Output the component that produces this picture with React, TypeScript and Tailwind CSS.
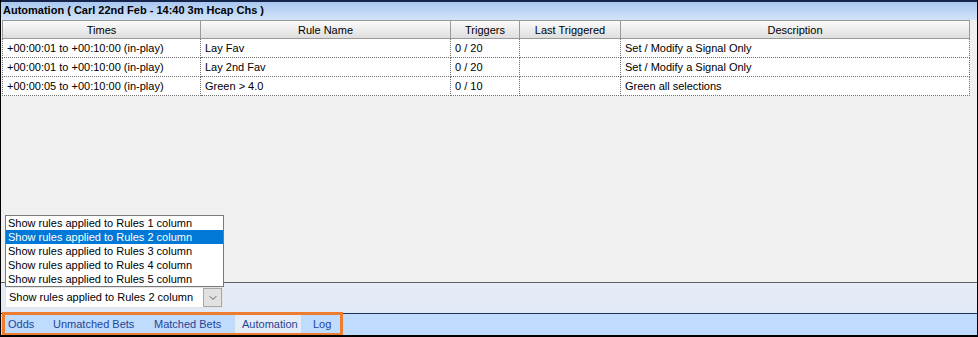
import { ChevronDown } from "lucide-react";

const rules = [
    { times: "+00:00:01 to +00:10:00 (in-play)", name: "Lay Fav", triggers: "0 / 20", last: "", desc: "Set / Modify a Signal Only" },
    { times: "+00:00:01 to +00:10:00 (in-play)", name: "Lay 2nd Fav", triggers: "0 / 20", last: "", desc: "Set / Modify a Signal Only" },
    { times: "+00:00:05 to +00:10:00 (in-play)", name: "Green > 4.0", triggers: "0 / 10", last: "", desc: "Green all selections" },
];

const headers = ["Times", "Rule Name", "Triggers", "Last Triggered", "Description"];

const options = [1, 2, 3, 4, 5].map((n) => `Show rules applied to Rules ${n} column`);

// fixed tab boxes, matching the WinForms tab strip
const tabs = [
    { label: "Odds", cls: "w-[45px] pl-[7px]" },
    { label: "Unmatched Bets", cls: "w-[101px] pl-[7px]" },
    { label: "Matched Bets", cls: "w-[87px] pl-[7px]" },
    { label: "Automation", cls: "w-[68px] pl-[7px] bg-[#e4ecf8] border-x border-[#c9d9ee]" },
    { label: "Log", cls: "pl-[11px]" },
];

export default function App() {
    return (
        <div className="w-[978px] h-[337px] flex flex-col bg-[#f0f0f0] border-x border-b-2 border-black text-[11px] text-black font-['Liberation_Sans',Arial,sans-serif] overflow-hidden">
            {/* title bar */}
            <div className="h-[20px] shrink-0 border-t-2 border-[#14244a] bg-gradient-to-b from-[#a9c7ef] to-[#d3e4f9] pl-[2px] font-bold leading-[17px]">
                Automation ( Carl 22nd Feb - 14:40 3m Hcap Chs )
            </div>

            {/* rules table */}
            <div className="h-[262px] shrink-0 bg-[#f0f0f0] pl-[1px]">
                <div className="w-[968px] grid grid-cols-[199px_250px_69px_101px_349px]">
                    {headers.map((h) => (
                        <div
                            key={h}
                            className="h-[19px] leading-[18px] text-center bg-gradient-to-b from-[#fbfbfb] to-[#dedede] border-t border-r border-b border-[#9a9a9a] first:border-l"
                        >
                            {h}
                        </div>
                    ))}
                    {rules.map((r, i) => (
                        <div key={i} className="contents">
                            <div className="h-[19px] leading-[18px] pl-[4px] bg-white border-l border-r border-b border-dotted border-[#6f6f6f]">{r.times}</div>
                            <div className="h-[19px] leading-[18px] pl-[4px] bg-white border-r border-b border-dotted border-[#6f6f6f]">{r.name}</div>
                            <div className="h-[19px] leading-[18px] pl-[4px] bg-white border-r border-b border-dotted border-[#6f6f6f]">{r.triggers}</div>
                            <div className="h-[19px] leading-[18px] pl-[4px] bg-white border-r border-b border-dotted border-[#6f6f6f]">{r.last}</div>
                            <div className="h-[19px] leading-[18px] pl-[4px] bg-white border-r border-b border-dotted border-[#6f6f6f]">{r.desc}</div>
                        </div>
                    ))}
                </div>
            </div>

            {/* filter panel */}
            <div className="relative h-[31px] shrink-0 border-t border-[#5f5f5f] bg-gradient-to-b from-[#e6edf8] to-[#e1e9f6] pt-[4px] pl-[4px]">
                <div className="relative w-[218px] h-[21px] bg-white border border-[#e4e4e4] flex items-center">
                    <span className="pl-[3px] leading-[19px]">{options[1]}</span>
                    <div className="absolute right-0 top-0 w-[19px] h-[19px] bg-[#e1e1e1] border border-[#a8a8a8] flex items-center justify-center">
                        <ChevronDown size={12} strokeWidth={1.6} className="text-[#3c3c3c]" />
                    </div>
                </div>

                {/* open dropdown list */}
                <div className="absolute left-[4px] top-[-68px] w-[219px] bg-white border border-[#7a7a7a] z-10">
                    {options.map((o, i) => (
                        <div
                            key={o}
                            className={`h-[14px] leading-[14px] pl-[2px] whitespace-nowrap ${i === 1 ? "bg-[#0078d7] text-white" : ""}`}
                        >
                            {o}
                        </div>
                    ))}
                </div>
            </div>

            {/* tab strip */}
            <div className="relative h-[22px] shrink-0 border-t border-[#1f3455] bg-[#bfdbfe] flex items-stretch text-[#1f4596]">
                {tabs.map((t) => (
                    <div key={t.label} className={`leading-[20px] whitespace-nowrap ${t.cls}`}>
                        {t.label}
                    </div>
                ))}
                <div className="absolute left-[1px] top-[-2px] w-[341px] h-[24px] border-[3px] border-[#ed7d31] pointer-events-none" />
            </div>
        </div>
    );
}
